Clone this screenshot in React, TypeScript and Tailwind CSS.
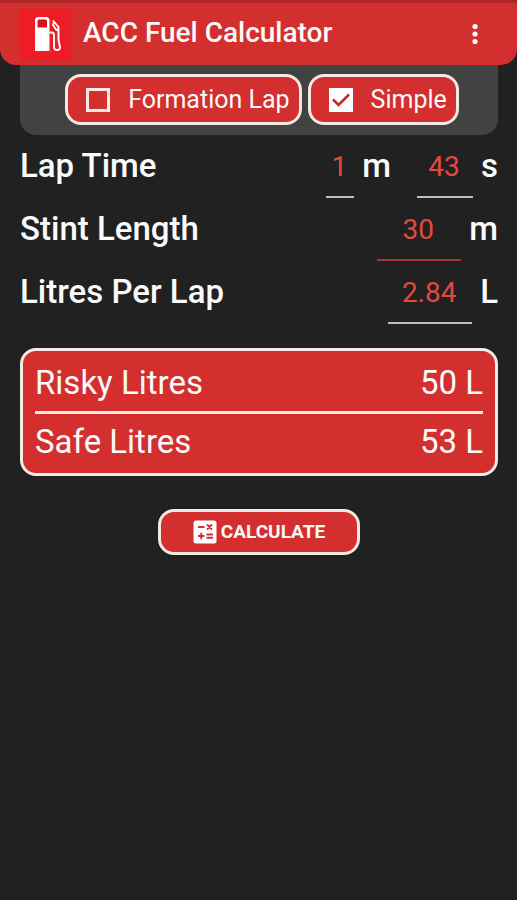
import { type FormEvent, type ReactNode, useState } from "react";

function FuelPumpIcon() {
  return (
    <svg aria-hidden="true" className="size-12" fill="none" viewBox="0 0 48 48">
      <path d="M13 10.500a3.500 3.500 0 0 1 3.500-3.500h7.500a3.500 3.500 0 0 1 3.500 3.500V41H13z" fill="#fff" />
      <path d="M15.500 11a1.500 1.500 0 0 1 1.500-1.500h6.500a1.500 1.500 0 0 1 1.500 1.500V17.500h-9.500z" fill="#d5121c" />
      <path
        d="M27.500 22.500h2a2.500 2.500 0 0 1 2.500 2.500V37a3 3 0 0 0 3 3h.5a2.500 2.500 0 0 0 2.500-3c-.5-3-1.500-5-1.500-9V17l-5.500-6.500M32 12l-1 3 3 4.500 2.500 1"
        stroke="#fff"
        strokeLinejoin="round"
        strokeWidth="1.900"
      />
    </svg>
  );
}

function MoreIcon() {
  return (
    <svg aria-hidden="true" className="size-8" fill="currentColor" viewBox="0 0 32 32">
      <circle cx="16" cy="8.500" r="2.600" />
      <circle cx="16" cy="16" r="2.600" />
      <circle cx="16" cy="23.500" r="2.600" />
    </svg>
  );
}

function CalculateIcon() {
  return (
    <svg aria-hidden="true" className="size-6" viewBox="0 0 24 24">
      <rect fill="#fff" height="23" rx="2.500" width="23" x=".5" y=".5" />
      <path
        d="M5 7h6.500M14 4.500l5 5M19 4.500l-5 5M5 16h6.500M8.250 12.750v6.500M13.500 14.500h6.500M13.500 17.800h6.500"
        stroke="#d32f2f"
        strokeWidth="1.900"
      />
    </svg>
  );
}

function CheckChip({
  checked,
  label,
  onChange,
}: {
  checked: boolean;
  label: string;
  onChange: (checked: boolean) => void;
}) {
  return (
    <label className="flex h-[51px] items-center gap-[18px] rounded-2xl border-3 border-[#f5e9e6] bg-[#d32f2f] pr-[9px] pl-[18px] text-[25px] whitespace-nowrap">
      <span className="grid size-6 place-items-center">
        <input
          checked={checked}
          className="col-start-1 row-start-1 size-6 appearance-none border-3 border-[#fbe9e7] checked:border-white checked:bg-white"
          onChange={(event) => onChange(event.target.checked)}
          type="checkbox"
        />
        {checked ? (
          <svg
            aria-hidden="true"
            className="pointer-events-none col-start-1 row-start-1 size-6"
            fill="none"
            viewBox="0 0 24 24"
          >
            <path d="M4 11.500l5.500 5.500L20 6.500" stroke="#c62828" strokeWidth="2.500" />
          </svg>
        ) : null}
      </span>
      {label}
    </label>
  );
}

function FieldRow({ children, label }: { children: ReactNode; label: string }) {
  return (
    <div className="flex h-[63px] items-center justify-between text-[33px] font-medium">
      <span className="pb-0.5">{label}</span>
      <div className="flex h-full items-center gap-[26px]">{children}</div>
    </div>
  );
}

function NumberField({
  className,
  label,
  onChange,
  unit,
  value,
}: {
  className: string;
  label: string;
  onChange: (value: string) => void;
  unit: string;
  value: string;
}) {
  return (
    <label className="flex h-full items-center gap-2">
      <input
        aria-label={label}
        className={`h-full border-b-2 pt-0.5 pr-0.5 text-center text-[28px] font-normal text-[#e24a3f] outline-none ${className}`}
        inputMode="decimal"
        onChange={(event) => onChange(event.target.value)}
        value={value}
      />
      <span className="pb-0.5">{unit}</span>
    </label>
  );
}

export default function App() {
  const [formationLap, setFormationLap] = useState(false);
  const [simple, setSimple] = useState(true);
  const [minutes, setMinutes] = useState("1");
  const [seconds, setSeconds] = useState("43");
  const [stint, setStint] = useState("30");
  const [perLap, setPerLap] = useState("2.84");
  const [result, setResult] = useState({ risky: 50, safe: 53 });

  function calculate(event: FormEvent) {
    event.preventDefault();
    const lapSeconds = Number(minutes) * 60 + Number(seconds);
    const litres = Number(perLap);
    if (!lapSeconds || !litres) return;
    const laps = (Number(stint) * 60) / lapSeconds + (formationLap ? 1 : 0);
    const risky = Math.ceil(laps * litres);
    setResult({ risky, safe: Math.ceil(risky + litres) });
  }

  return (
    <div className="min-h-screen bg-[#212121] font-[Roboto,sans-serif] text-[#fafafa]">
      <header className="flex h-[65px] items-center rounded-b-2xl border-t-3 border-[#b02626] bg-[#d32f2f] pr-[26px] pl-5">
        <span className="grid size-[51px] place-items-center bg-[#ee1c25]">
          <FuelPumpIcon />
        </span>
        <h1 className="ml-3 flex-1 pb-0.5 text-[28px] font-medium">ACC Fuel Calculator</h1>
        <button aria-label="More options" type="button">
          <MoreIcon />
        </button>
      </header>

      <form className="pr-[19px] pl-5" onSubmit={calculate}>
        <div className="flex h-[70px] justify-center gap-1.5 rounded-b-2xl bg-[#424242] pt-[9px] pl-1.5">
          <CheckChip checked={formationLap} label="Formation Lap" onChange={setFormationLap} />
          <CheckChip checked={simple} label="Simple" onChange={setSimple} />
        </div>

        <FieldRow label="Lap Time">
          <NumberField
            className="w-7 border-[#bdbdbd]"
            label="Lap time minutes"
            onChange={setMinutes}
            unit="m"
            value={minutes}
          />
          <NumberField
            className="w-14 border-[#bdbdbd]"
            label="Lap time seconds"
            onChange={setSeconds}
            unit="s"
            value={seconds}
          />
        </FieldRow>
        <FieldRow label="Stint Length">
          <NumberField
            className="w-[84px] border-[#a33631]"
            label="Stint length"
            onChange={setStint}
            unit="m"
            value={stint}
          />
        </FieldRow>
        <FieldRow label="Litres Per Lap">
          <NumberField
            className="w-[84px] border-[#bdbdbd]"
            label="Litres per lap"
            onChange={setPerLap}
            unit="L"
            value={perLap}
          />
        </FieldRow>

        <dl className="mt-6 rounded-2xl border-3 border-[#f5e9e6] bg-[#d32f2f] px-3 text-[33px]">
          <div className="flex h-[63px] items-center justify-between border-b-3 border-[#f5e9e6] pt-1">
            <dt>Risky Litres</dt>
            <dd>{result.risky} L</dd>
          </div>
          <div className="flex h-[59px] items-center justify-between pb-1">
            <dt>Safe Litres</dt>
            <dd>{result.safe} L</dd>
          </div>
        </dl>

        <button
          className="mx-auto mt-[33px] flex h-[46px] w-[202px] items-center justify-center gap-1 rounded-2xl border-3 border-[#f5e9e6] bg-[#d32f2f] text-[19px] font-bold"
          type="submit"
        >
          <CalculateIcon />
          CALCULATE
        </button>
      </form>
    </div>
  );
}
